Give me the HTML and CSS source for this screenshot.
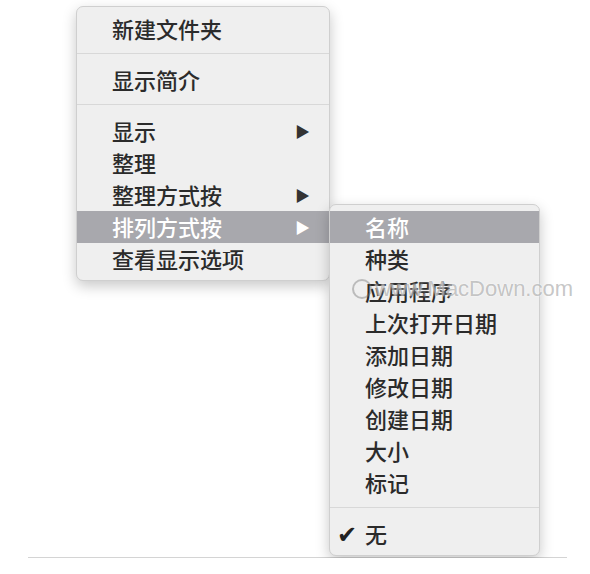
FILE: index.html
```html
<!DOCTYPE html>
<html lang="zh-CN">
    <head>
        <link rel="stylesheet" href="styles.css">
        <meta charset="UTF-8">
        <title>排列方式按</title>
    </head>
    <body>
        <div class="desk">
            <ul class="menu main-menu">
                <li class="item">新建文件夹</li>
                <li class="sep"></li>
                <li class="item">显示简介</li>
                <li class="sep"></li>
                <li class="item">显示<span class="arrow">&#9654;</span></li>
                <li class="item">整理</li>
                <li class="item">整理方式按<span class="arrow">&#9654;</span></li>
                <li class="item active">排列方式按<span class="arrow">&#9654;</span>
                    <ul class="menu sub-menu">
                        <li class="item active">名称</li>
                        <li class="item">种类</li>
                        <li class="item">应用程序</li>
                        <li class="item">上次打开日期</li>
                        <li class="item">添加日期</li>
                        <li class="item">修改日期</li>
                        <li class="item">创建日期</li>
                        <li class="item">大小</li>
                        <li class="item">标记</li>
                        <li class="sep"></li>
                        <li class="item"><span class="check">&#10004;</span>无</li>
                    </ul>
                </li>
                <li class="item">查看显示选项</li>
            </ul>
        </div>
        <div class="watermark"><span class="logo"></span>www.MacDown.com</div>
    </body>
</html>
```
FILE: styles.css
```css
body {
    margin: 0;
    background: #fff;
    font-family: "Noto Sans CJK SC", "Noto Sans", sans-serif;
}
.desk {
    position: relative;
    margin: 0 23px 0 28px;
    height: 557px;
    border-bottom: 1px solid #d4d4d4;
}
.menu {
    list-style: none;
    margin: 0;
    box-sizing: border-box;
    background: #efefef;
    border: 1px solid #cfcfcf;
    border-radius: 7px;
    box-shadow: 0 5px 14px rgba(0, 0, 0, 0.22);
}
.main-menu {
    position: relative;
    top: 6px;
    margin-left: 48px;
    width: 254px;
    padding: 6px 0 5px 0;
}
.item {
    position: relative;
    height: 32px;
    line-height: 30px;
    padding-left: 35px;
    font-size: 22px;
    font-weight: 500;
    color: #2b2b2b;
}
.item.active {
    background: #a8a8ad;
    color: #fff;
}
.sub-menu .item {
    color: #2b2b2b;
}
.sub-menu .item.active {
    color: #fff;
}
.sep {
    height: 1px;
    margin: 8px 0 10px 0;
    background: #d8d8d8;
}
.arrow {
    position: absolute;
    right: 19px;
    top: 1px;
    font-size: 15px;
    color: #333;
}
.active > .arrow {
    color: #fff;
}
.sub-menu {
    position: absolute;
    left: 252px;
    top: -7px;
    width: 211px;
    padding: 6px 0 5px 0;
    z-index: 2;
}
.check {
    position: absolute;
    left: 7px;
    top: 0;
    font-size: 24px;
    color: #222;
}
.watermark {
    position: absolute;
    left: 352px;
    top: 276px;
    z-index: 3;
    display: flex;
    align-items: center;
    gap: 3px;
    font-family: "Liberation Sans", sans-serif;
    font-size: 22px;
    color: rgba(110, 110, 110, 0.4);
    text-shadow: 0 0 2px #fff;
}
.logo {
    width: 16px;
    height: 16px;
    border: 2px solid rgba(110, 110, 110, 0.4);
    border-radius: 50%;
}
```
